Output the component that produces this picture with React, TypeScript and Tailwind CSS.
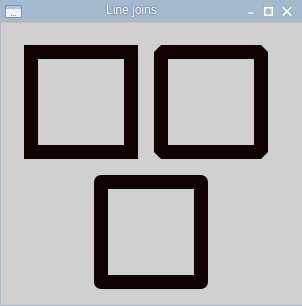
export default function App() {
  return (
    <div className="w-[302px] h-[306px] flex flex-col bg-[#a9bdd2] font-['DejaVu_Sans',sans-serif] overflow-hidden">
      {/* title bar */}
      <div className="h-[22px] flex items-center relative bg-[#a6bacf]">
        <div className="ml-[5px] w-[17px] h-[13px] rounded-[1px] border border-[#7f94ab] bg-[#eef2f6] flex flex-col">
          <div className="h-[3px] bg-[#b6c6d6]" />
          <div className="flex-1 flex items-end justify-center gap-[1px] pb-[1px]">
            <span className="w-[1px] h-[1px] bg-[#8a9bb0]" />
            <span className="w-[1px] h-[1px] bg-[#8a9bb0]" />
            <span className="w-[1px] h-[1px] bg-[#8a9bb0]" />
          </div>
        </div>
        <div className="absolute left-[106px] top-[3px] font-['Liberation_Sans',sans-serif] text-[12px] leading-[15px] text-white [text-shadow:0_0_2px_#4d6581,0_0_1px_#4d6581]">
          Line joins
        </div>
        <div className="ml-auto mr-[9px] flex items-center gap-[7px]">
          <svg width="10" height="10" viewBox="0 0 10 10">
            <rect x="1" y="6" width="7" height="2" fill="#fff" stroke="#7a8fa6" strokeWidth="0.5" />
          </svg>
          <svg width="11" height="11" viewBox="0 0 11 11">
            <rect x="1.5" y="1.5" width="8" height="8" fill="none" stroke="#fff" strokeWidth="2" />
            <rect x="0.5" y="0.5" width="10" height="10" fill="none" stroke="#7a8fa6" strokeWidth="0.5" />
          </svg>
          <svg width="12" height="11" viewBox="0 0 12 11">
            <path d="M2 1.5 L10 9.5 M10 1.5 L2 9.5" stroke="#7a8fa6" strokeWidth="3.4" />
            <path d="M2 1.5 L10 9.5 M10 1.5 L2 9.5" stroke="#fff" strokeWidth="2" />
          </svg>
        </div>
      </div>
      {/* client area */}
      <div className="flex-1 ml-[1px] mb-[1px] bg-[#d0d0d0] border-t border-[#c4c4c4] flex flex-col pt-[22px] pl-[23px]">
        <div className="flex gap-[16px]">
          <div className="w-[114px] h-[114px] border-[14px] border-[#110000]" />
          <div className="w-[114px] h-[114px] bg-[#110000] p-[14px] [clip-path:polygon(7px_0,107px_0,114px_7px,114px_107px,107px_114px,7px_114px,0_107px,0_7px)]">
            <div className="w-full h-full bg-[#d0d0d0]" />
          </div>
        </div>
        <div className="mt-[16px] ml-[70px] w-[114px] h-[114px] border-[14px] border-[#110000] rounded-[7px]" />
      </div>
    </div>
  );
}
